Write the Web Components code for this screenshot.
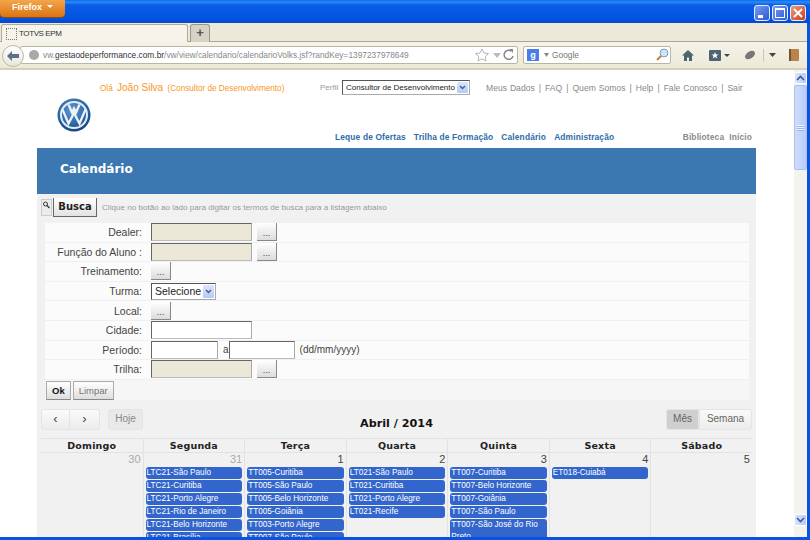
<!DOCTYPE html>
<html lang="pt-BR">
<head>
<meta charset="utf-8">
<title>TOTVS EPM</title>
<style>
    html, body { margin: 0; height: 540px; overflow: hidden; background: #fff; font-family: "Liberation Sans", sans-serif; }
</style>
</head>
<body>
<xp-window>
    <ff-toolbar slot="chrome"></ff-toolbar>
    <site-header></site-header>
    <page-panel></page-panel>
</xp-window>

<script>
function define(name, html) {
    customElements.define(name, class extends HTMLElement {
        constructor() {
            super();
            this.attachShadow({ mode: 'open' });
        }
        connectedCallback() {
            this.shadowRoot.innerHTML = typeof html === 'function' ? html(this) : html;
        }
    });
}

define('xp-window', `
    <style>
        :host { display: flex; flex-direction: column; width: 810px; height: 540px; overflow: hidden; background: #0a53e0; }
        .title { flex: none; height: 23px; display: flex; justify-content: space-between; background: linear-gradient(#0a6af0 0, #2a8cf5 2px, #0a5ee8 5px, #0353e2 18px, #0348cf 23px); }
        .ffbtn { width: 65px; height: 17px; box-sizing: border-box; padding: 2px 0 0 12px; background: linear-gradient(#f2a64a, #dc7414); border-radius: 0 0 4px 4px; box-shadow: 0 1px 0 #8a4b10; color: #fff; font: bold 9px "Liberation Sans", sans-serif; }
        .ffbtn i { display: inline-block; margin-left: 5px; vertical-align: 2px; border: 3px solid transparent; border-top: 3px solid #fff; border-bottom: 0; }
        .caps { display: flex; gap: 2px; padding: 5px 4px 0 0; }
        .caps span { width: 16px; height: 16px; box-sizing: border-box; border: 1px solid #e6eefc; border-radius: 3px; background: linear-gradient(135deg, #7a9cf0, #2a56d8); display: flex; }
        .caps .close { background: linear-gradient(135deg, #ec9a7c, #cf3d15); }
        .body { flex: 1; min-height: 0; margin: 0 3px 3px 0; display: flex; flex-direction: column; background: #fff; }
        .view { flex: 1; min-height: 0; display: flex; }
        .page { flex: 1; min-width: 0; overflow: hidden; }
        .bar { flex: none; width: 13px; display: flex; flex-direction: column; background: #f4f3ee; padding-top: 2px; }
        .arrow { height: 12px; background: linear-gradient(90deg, #d8e4fb, #b6cbf6); border: 1px solid #fff; border-radius: 2px; box-sizing: border-box; display: flex; align-items: center; justify-content: center; }
        .thumb { height: 85px; margin-top: 1px; box-sizing: border-box; background: linear-gradient(90deg, #cfdcfb, #b9cdf8); border: 1px solid #a9bfee; border-radius: 2px; display: flex; align-items: center; justify-content: center; }
        .thumb i { width: 7px; height: 6px; background: repeating-linear-gradient(#eef3fe 0 1px, #9db6ea 1px 2px); }
        .fill { flex: 1; }
        .grip { height: 11px; }
    </style>
    <div class="title">
        <div class="ffbtn">Firefox<i></i></div>
        <div class="caps">
            <span><svg width="14" height="14"><rect x="3" y="9" width="5" height="3" fill="#fff"/></svg></span>
            <span><svg width="14" height="14"><rect x="2.5" y="2.5" width="9" height="9" fill="none" stroke="#fff"/><rect x="2" y="2" width="10" height="2" fill="#fff"/></svg></span>
            <span class="close"><svg width="14" height="14"><path d="M3 3l8 8M11 3l-8 8" stroke="#fff" stroke-width="2"/></svg></span>
        </div>
    </div>
    <div class="body">
        <slot name="chrome"></slot>
        <div class="view">
            <div class="page"><slot></slot></div>
            <div class="bar">
                <div class="arrow"><svg width="9" height="6"><path d="M1 5l3.5-3.5L8 5" fill="none" stroke="#3d5c9c" stroke-width="1.6"/></svg></div>
                <div class="thumb"><i></i></div>
                <div class="fill"></div>
                <div class="arrow"><svg width="9" height="6"><path d="M1 1l3.5 3.5L8 1" fill="none" stroke="#3d5c9c" stroke-width="1.6"/></svg></div>
                <div class="grip"></div>
            </div>
        </div>
    </div>
`);

define('ff-toolbar', `
    <style>
        :host { display: block; font-family: "Liberation Sans", sans-serif; }
        .tabs { height: 19px; display: flex; gap: 2px; padding: 1px 0 0 1px; box-sizing: border-box; background: #ece9d8; border-bottom: 1px solid #a9a694; }
        .tab { width: 187px; height: 19px; box-sizing: border-box; padding: 3px 0 0 4px; display: flex; gap: 2px; background: #f6f4ea; border: 1px solid #aeab9a; border-bottom: 0; border-radius: 3px 3px 0 0; font-size: 8px; line-height: 11px; letter-spacing: -.4px; color: #333; }
        .tab i { width: 9px; height: 10px; border: 1px dotted #777; }
        .new { width: 20px; height: 18px; box-sizing: border-box; background: #d6d3c4; border: 1px solid #9b9888; border-bottom: 0; border-radius: 3px 3px 0 0; text-align: center; font: bold 13px/15px "Liberation Sans", sans-serif; color: #555; }
        .nav { height: 28px; box-sizing: border-box; display: flex; align-items: center; background: linear-gradient(#f5f3e8, #ece9d9); border-bottom: 2px solid #d3d0c0; position: relative; padding-left: 20px; }
        .back { position: absolute; left: 2px; top: 3px; width: 22px; height: 22px; box-sizing: border-box; border-radius: 50%; border: 1px solid #bdbaa8; background: linear-gradient(#fff, #e8e6da); display: flex; align-items: center; justify-content: center; }
        .url { width: 498px; height: 18px; box-sizing: border-box; display: flex; align-items: center; padding: 0 0 0 5px; background: #fff; border: 1px solid #b9b6a5; border-radius: 2px; font-size: 8.35px; color: #888; white-space: nowrap; overflow: hidden; }
        .url b { font-weight: normal; color: #333; }
        .url .globe { flex: none; width: 10px; height: 10px; margin: 0 4px 0 3px; border-radius: 50%; background: #a9a9a9; }
        .url .text { flex: 1; overflow: hidden; }
        .search { width: 148px; height: 18px; margin-left: 5px; box-sizing: border-box; display: flex; align-items: center; background: #fff; border: 1px solid #b9b6a5; border-radius: 2px; font-size: 8.35px; color: #777; }
        .g { width: 12px; height: 12px; margin-left: 3px; background: #4a7de8; color: #fff; font: bold 9px/12px "Liberation Sans", sans-serif; text-align: center; }
        .search .t { flex: 1; margin-left: 1px; }
        .tools { display: flex; align-items: center; margin-left: 10px; }
    </style>
    <div class="tabs">
        <div class="tab"><i></i>TOTVS EPM</div>
        <div class="new">+</div>
    </div>
    <div class="nav">
        <div class="back"><svg width="14" height="12"><path d="M1 6l5-5v3h7v4H6v3z" fill="#5b7088"/></svg></div>
        <div class="url">
            <span class="globe"></span>
            <span class="text">vw.<b>gestaodeperformance.com.br</b>/vw/view/calendario/calendarioVolks.jsf?randKey=1397237978649</span>
            <svg width="42" height="14"><path d="M7 1l2 4 4.500 .6-3.300 3 .8 4.400L7 10.800 3 13l.8-4.400L.5 5.600 5 5z" fill="#fff" stroke="#b5b5b5"/><path d="M18 5h8l-4 5z" fill="#bbb"/><path d="M36 3a4.500 4.500 0 1 0 2 5" fill="none" stroke="#888" stroke-width="1.5"/><path d="M34 1l4 0 0 4z" fill="#888"/></svg>
        </div>
        <div class="search">
            <span class="g">g</span>
            <svg width="9" height="6" style="margin-left:3px"><path d="M2 1h5L4.500 5z" fill="#888"/></svg>
            <span class="t">Google</span>
            <svg width="14" height="14" style="margin-right:1px"><circle cx="9" cy="5" r="4" fill="#cfe3f7" stroke="#7d9fc4"/><path d="M6 8l-4 4" stroke="#c08a3c" stroke-width="2.200"/></svg>
        </div>
        <div class="tools">
            <svg width="14" height="13"><path d="M7 1L1 6.500h2V12h3V8.500h2V12h3V6.500h2z" fill="#4f6272"/></svg>
            <svg width="22" height="13" style="margin-left:14px"><rect x="0" y="1" width="12" height="11" rx="1" fill="#4f6272"/><path d="M6 3l1 2.500h2.500L7.500 7l.7 2.500L6 8 3.800 9.500 4.500 7 2.500 5.500H5z" fill="#fff"/><path d="M15 5h6l-3 3z" fill="#444"/></svg>
            <svg width="12" height="12" style="margin-left:13px"><ellipse cx="6" cy="6" rx="5.500" ry="3.500" transform="rotate(-35 6 6)" fill="#777"/></svg>
            <span style="width:1px;height:13px;background:#c9c6b5;margin-left:7px"></span>
            <svg width="7" height="5" style="margin-left:5px"><path d="M0 0h7L3.500 4z" fill="#444"/></svg>
            <svg width="12" height="14" style="margin-left:12px"><rect x="1" y="1" width="10" height="12" rx="1" fill="#b98349"/><rect x="1" y="1" width="2" height="12" fill="#6e5338"/></svg>
        </div>
    </div>
`);

define('vw-logo', `
    <style>:host { display: block; width: 34px; height: 34px; }</style>
    <svg width="34" height="34" viewBox="0 0 34 34">
        <defs><radialGradient id="b" cx=".45" cy=".35" r=".75"><stop offset="0" stop-color="#5f9ad2"/><stop offset=".7" stop-color="#1f5a9c"/><stop offset="1" stop-color="#0d2f60"/></radialGradient></defs>
        <circle cx="17" cy="17" r="16.500" fill="url(#b)"/>
        <circle cx="17" cy="17" r="13" fill="none" stroke="#e6ebf2" stroke-width="2"/>
        <path d="M11.500 6.500l3.500 8 2-4 2 4 3.500-8M5.500 11.500l6 14 5.500-10.500 5.500 10.500 6-14" fill="none" stroke="#eef1f5" stroke-width="2.300"/>
    </svg>
`);

// drawn select: the XP arrow box can't be had from a native one here
define('xp-select', el => `
    <style>
        :host { display: inline-flex; flex: none; align-items: center; box-sizing: border-box; height: ${el.getAttribute('height') || 17}px; width: ${el.getAttribute('width')}px; padding: 1px 1px 1px 3px; background: #fff; border: 1px solid #666; border-color: #555 #aaa #aaa #555; font-size: ${el.getAttribute('size') || 10}px; color: #222; }
        span { flex: 1; min-width: 0; overflow: hidden; white-space: nowrap; }
        i { flex: none; width: 11px; align-self: stretch; background: linear-gradient(#dbe6fc, #b4c9f6); border-radius: 1px; display: flex; align-items: center; justify-content: center; }
    </style>
    <span>${el.getAttribute('text')}</span>
    <i><svg width="7" height="5"><path d="M1 1l2.500 2.500L6 1" fill="none" stroke="#3d5c9c" stroke-width="1.400"/></svg></i>
`);

define('site-header', `
    <style>
        :host { display: flex; flex-direction: column; height: 78px; box-sizing: border-box; padding: 9px 42px 0 57px; font-family: "Liberation Sans", sans-serif; }
        .top { height: 17px; display: flex; align-items: center; font-size: 8.600px; color: #888; }
        .hello { flex: none; margin-left: 43px; color: #f7971d; width: 220px; font-size: 8.200px; white-space: nowrap; }
        .hello b { font-weight: normal; font-size: 10px; margin: 0 2px; }
        .perfil { flex: none; width: 18px; font-size: 8px; color: #999; }
        xp-select { margin-left: 4px; }
        .links { margin-left: 16px; white-space: nowrap; word-spacing: .5px; }
        .links i { font-style: normal; margin: 0 4px; }
        vw-logo { margin-top: 2px; }
        .nav { height: 12px; display: flex; justify-content: space-between; padding-left: 278px; font: bold 8.400px/10px "Liberation Sans", sans-serif; letter-spacing: .15px; color: #2e6da8; }
        .nav span span { margin-right: 8px; }
        .nav .side { color: #8b8b8b; }
        .nav .side span { margin-right: 5px; }
    </style>
    <div class="top">
        <span class="hello">Olá <b>João Silva</b> (Consultor de Desenvolvimento)</span>
        <span class="perfil">Perfil</span>
        <xp-select width="128" height="15" size="8" text="Consultor de Desenvolvimento"></xp-select>
        <span class="links">Meus Dados<i>|</i>FAQ<i>|</i>Quem Somos<i>|</i>Help<i>|</i>Fale Conosco<i>|</i>Sair</span>
    </div>
    <vw-logo></vw-logo>
    <div class="nav">
        <span><span>Leque de Ofertas</span><span>Trilha de Formação</span><span>Calendário</span><span>Administração</span></span>
        <span class="side"><span>Biblioteca</span>Início</span>
    </div>
`);

define('page-panel', `
    <style>
        :host { display: block; width: 719px; margin-left: 37px; background: #f1f1f1; font-family: "Liberation Sans", sans-serif; }
        .head { height: 46px; box-sizing: border-box; padding: 13px 0 0 23px; background: #3b78b1; color: #fff; font: bold 12px/16px "DejaVu Sans", sans-serif; }
    </style>
    <div class="head">Calendário</div>
    <search-bar></search-bar>
    <search-form></search-form>
    <cal-view></cal-view>
`);

define('search-bar', `
    <style>
        :host { display: flex; align-items: center; height: 29px; box-sizing: border-box; padding: 4px 0 6px 4px; font-size: 8.100px; color: #999; }
        .ico { width: 11px; height: 17px; background: #ececec; border: 1px solid #ccc; box-sizing: border-box; margin-right: 1px; }
        .btn { width: 44px; height: 19px; box-sizing: border-box; margin-right: 5px; background: linear-gradient(#fff, #e2e2e2); border: 1px solid #666; border-width: 0 1px 1px 1px; text-align: center; font: bold 10px/18px "DejaVu Sans", sans-serif; color: #222; }
    </style>
    <div class="ico"><svg width="9" height="10"><circle cx="3.500" cy="4" r="2" fill="none" stroke="#333"/><path d="M5 5.500l2.500 2.500" stroke="#333" stroke-width="1.200"/></svg></div>
    <div class="btn">Busca</div>
    <span>Clique no botão ao lado para digitar os termos de busca para a listagem abaixo</span>
`);

define('form-row', el => `
    <style>
        :host { display: grid; grid-template-columns: 97px 1fr; column-gap: 9px; align-items: center; height: 19.600px; border-bottom: 1px solid #f0f0f0; box-sizing: border-box; font-size: 10.500px; color: #444; }
        .lbl { text-align: right; white-space: nowrap; }
        .ctl { display: flex; align-items: center; gap: 5px; font-size: 10px; }
    </style>
    <div class="lbl">${el.getAttribute('label')}</div>
    <div class="ctl"><slot></slot></div>
`);

define('pick-button', `
    <style>
        :host { display: inline-block; width: 20px; height: 18px; box-sizing: border-box; background: linear-gradient(#fff, #dcdcdc); border: 1px solid #888; border-width: 0 1px 1px 0; text-align: center; font: 9px/20px "Liberation Sans", sans-serif; color: #444; }
    </style>
    ...
`);

define('text-field', el => `
    <style>
        :host { display: inline-block; width: ${el.getAttribute('width') || 101}px; height: 18px; box-sizing: border-box; background: ${el.hasAttribute('locked') ? '#ebe8d8' : '#fff'}; border: 1px solid #888; border-color: #666 #aaa #bbb #666; }
    </style>
`);

define('search-form', `
    <style>
        :host { display: block; margin-left: 8px; width: 704px; background: #fbfbfb; font-family: "Liberation Sans", sans-serif; }
        .actions { display: flex; gap: 2px; padding: 1px 0 0 1px; height: 20px; box-sizing: border-box; background: #f6f6f6; }
        .act { height: 19px; box-sizing: border-box; padding: 0 5px; background: linear-gradient(#fff, #dedede); border: 1px solid #aaa; border-bottom-color: #888; font: 9.500px/17px "Liberation Sans", sans-serif; color: #777; }
        .ok { color: #111; font-weight: bold; }
    </style>
    <form-row label="Dealer:"><text-field locked></text-field><pick-button></pick-button></form-row>
    <form-row label="Função do Aluno :"><text-field locked></text-field><pick-button></pick-button></form-row>
    <form-row label="Treinamento:"><pick-button></pick-button></form-row>
    <form-row label="Turma:"><xp-select width="65" size="10.500" text="Selecione"></xp-select></form-row>
    <form-row label="Local:"><pick-button></pick-button></form-row>
    <form-row label="Cidade:"><text-field></text-field></form-row>
    <form-row label="Período:"><text-field width="67"></text-field><span style="margin-right:-5px">a</span><text-field width="66"></text-field><span>(dd/mm/yyyy)</span></form-row>
    <form-row label="Trilha:"><text-field locked></text-field><pick-button></pick-button></form-row>
    <div class="actions"><div class="act ok">Ok</div><div class="act">Limpar</div></div>
`);

define('cal-event', `
    <style>
        :host { display: block; margin: 0 0 1px; padding: 0 1px; background: #3366cc; border-radius: 3px; color: #fff; font: 8.200px/12px "Liberation Sans", sans-serif; }
    </style>
    <slot></slot>
`);

const weeks = {
    Domingo: [30, []],
    Segunda: [31, ['LTC21-São Paulo', 'LTC21-Curitiba', 'LTC21-Porto Alegre', 'LTC21-Rio de Janeiro', 'LTC21-Belo Horizonte', 'LTC21-Brasília']],
    'Terça': [1, ['TT005-Curitiba', 'TT005-São Paulo', 'TT005-Belo Horizonte', 'TT005-Goiânia', 'TT003-Porto Alegre', 'TT007-São Paulo']],
    Quarta: [2, ['LT021-São Paulo', 'LT021-Curitiba', 'LT021-Porto Alegre', 'LT021-Recife']],
    Quinta: [3, ['TT007-Curitiba', 'TT007-Belo Horizonte', 'TT007-Goiânia', 'TT007-São Paulo', 'TT007-São José do Rio Preto']],
    Sexta: [4, ['ET018-Cuiabá']],
    'Sábado': [5, []]
};

define('cal-view', () => `
    <style>
        :host { display: block; height: 150px; overflow: hidden; padding: 8px 4px 0; font-family: "Liberation Sans", sans-serif; }
        .bar { display: grid; grid-template-columns: 1fr auto 1fr; align-items: end; height: 22px; }
        .left, .right { display: flex; }
        .right { justify-content: flex-end; }
        .b { height: 21px; box-sizing: border-box; background: linear-gradient(#fafafa, #ececec); border: 1px solid #e4e4e4; border-radius: 3px; font-size: 10px; line-height: 17px; text-align: center; color: #888; }
        .prev { width: 29px; border-radius: 3px 0 0 3px; color: #444; font-size: 13px; }
        .next { width: 30px; border-radius: 0 3px 3px 0; border-left: 0; color: #444; font-size: 13px; }
        .hoje { width: 35px; margin-left: 8px; background: #e9e9e9; }
        .mes { width: 33px; border-radius: 3px 0 0 3px; background: #cfcfcf; color: #666; }
        .sem { width: 53px; border-radius: 0 3px 3px 0; color: #666; }
        h2 { margin: 0 0 -2px; font: bold 11.200px/16px "DejaVu Sans", sans-serif; color: #111; }
        .grid { margin-top: 8px; display: grid; grid-template-columns: repeat(7, 1fr); border-top: 1px solid #e2e2e2; }
        .col { min-width: 0; border-left: 1px solid #e2e2e2; }
        .col:first-child { border-left: 0; }
        .name { height: 13px; border-bottom: 1px solid #e2e2e2; text-align: center; font: bold 9.500px/14px "DejaVu Sans", sans-serif; letter-spacing: .2px; color: #222; }
        .num { height: 14px; padding-right: 2px; text-align: right; font-size: 11px; line-height: 13px; color: #444; }
        .off { color: #aaa; }
        .list { padding: 0 2px; }
    </style>
    <div class="bar">
        <div class="left"><div class="b prev">‹</div><div class="b next">›</div><div class="b hoje">Hoje</div></div>
        <h2>Abril / 2014</h2>
        <div class="right"><div class="b mes">Mês</div><div class="b sem">Semana</div></div>
    </div>
    <div class="grid">
        ${Object.entries(weeks).map(([day, [num, items]]) => `
            <div class="col">
                <div class="name">${day}</div>
                <div class="num ${num > 20 ? 'off' : ''}">${num}</div>
                <div class="list">${items.map(i => `<cal-event>${i}</cal-event>`).join('')}</div>
            </div>`).join('')}
    </div>
`);
</script>
</body>
</html>
